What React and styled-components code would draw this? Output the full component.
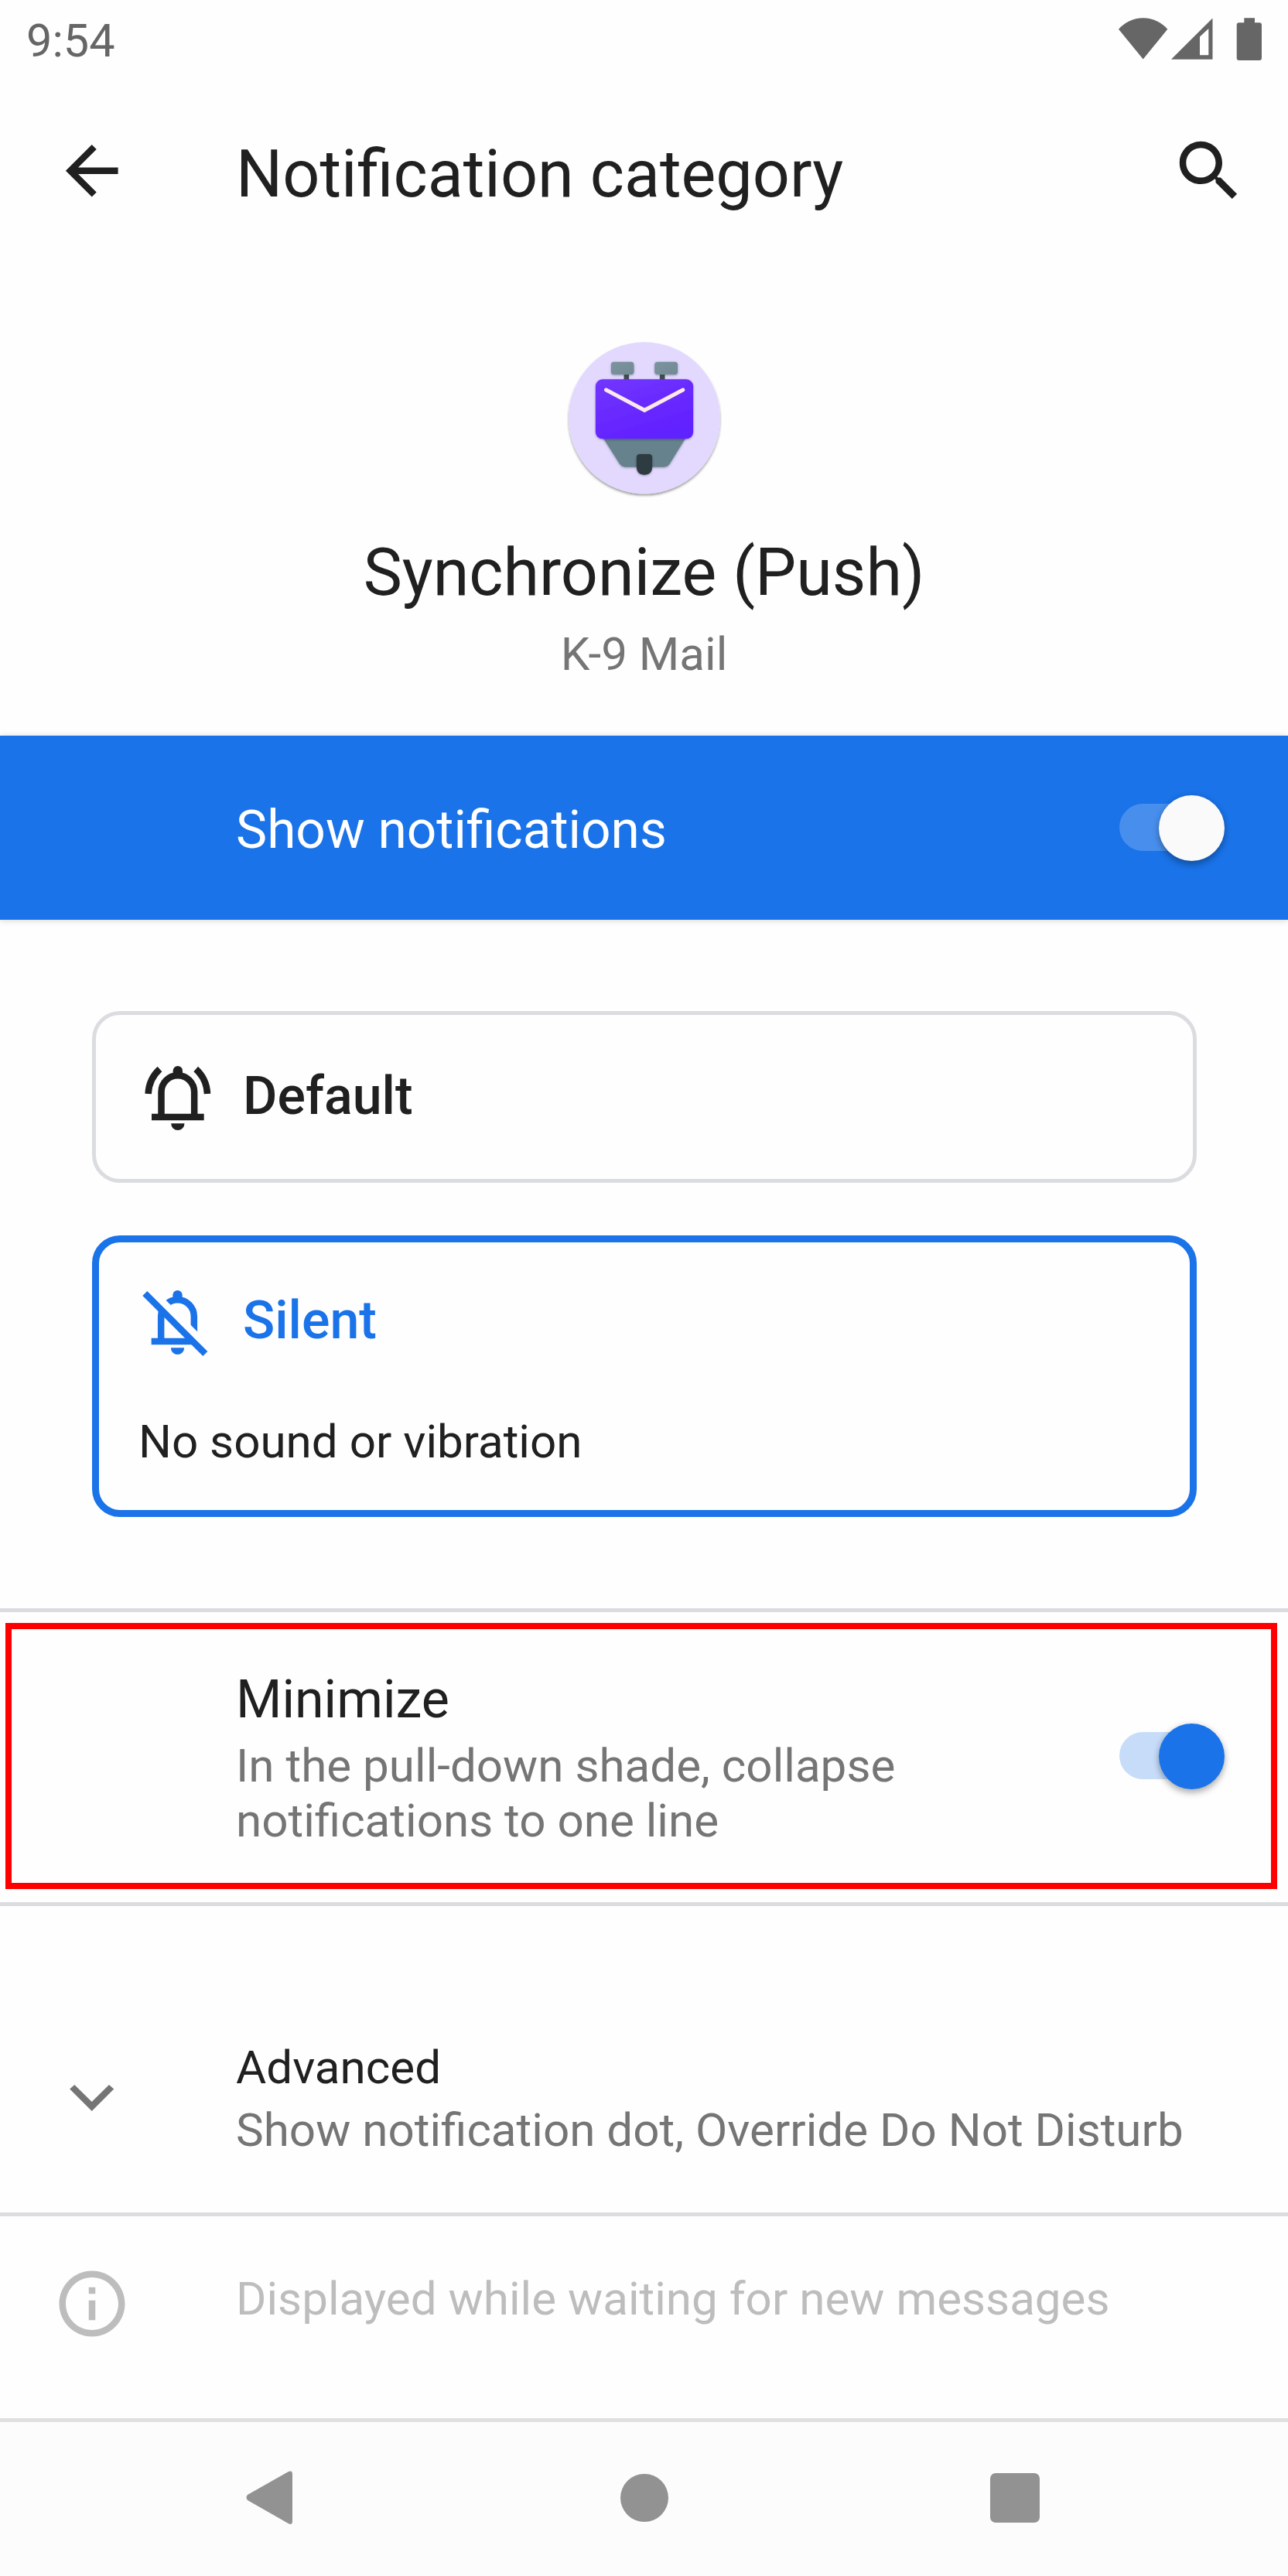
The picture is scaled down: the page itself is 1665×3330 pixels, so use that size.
import React from "react";
import styled, { createGlobalStyle } from "styled-components";

const color = {
  ink: "#202020",
  muted: "#757575",
  faint: "#bdbdbd",
  status: "#666666",
  accent: "#1a73e8",
  line: "#dadce0",
  alert: "#ff0000",
  nav: "#929292",
};

const GlobalStyle = createGlobalStyle`
  *, *::before, *::after { box-sizing: border-box; }
  body {
    margin: 0;
    background: #fefefe;
    font-family: Roboto, "Liberation Sans", sans-serif;
    -webkit-font-smoothing: antialiased;
  }
  svg { display: block; flex: none; }
  h1, h2, p { margin: 0; font-weight: 400; }
`;

const Screen = styled.div`
  display: flex;
  flex-direction: column;
  width: 1665px;
  height: 3330px;
  overflow: hidden;
  background: #fefefe;
  color: ${color.ink};
`;

const Text = styled.p`
  font-size: ${(p) => p.$size || 60.15}px;
  line-height: ${(p) => p.$line}px;
  font-weight: ${(p) => p.$weight || 400};
  color: ${(p) => p.$color || "inherit"};
  white-space: nowrap;
`;

const StatusBar = styled.header`
  display: flex;
  justify-content: space-between;
  align-items: flex-start;
  height: 102px;
  padding: 0 34px;
`;

const StatusIcons = styled.svg`
  margin-top: 23px;
`;

const AppBar = styled.div`
  display: flex;
  align-items: center;
  height: 237px;
  padding: 0 51px 0 68px;
`;

const AppTitle = styled(Text).attrs({ as: "h1" })`
  flex: 1;
  margin: 11px 0 0 135.500px;
`;

const Hero = styled.section`
  display: flex;
  flex-direction: column;
  align-items: center;
  height: 612px;
  padding-top: 100px;
`;

const HeroTitle = styled(Text).attrs({ as: "h2" })`
  margin: 42px 0 20px;
`;

const Banner = styled.section`
  display: flex;
  align-items: center;
  justify-content: space-between;
  height: 238px;
  flex: none;
  padding: 0 82px 0 305px;
  background: ${color.accent};
  color: #fff;
  box-shadow: 0 1px 8px rgba(0, 0, 0, 0.16);
`;

const BannerLabel = styled(Text)`
  margin-top: 6px;
`;

const Track = styled.div`
  display: flex;
  align-items: center;
  justify-content: flex-end;
  flex: none;
  width: 127px;
  height: 61px;
  margin: 0 9px 2px 0;
  border-radius: 31px;
  background: ${(p) => (p.$inverse ? "#488fed" : "#c6dcf9")};
`;

const Thumb = styled.div`
  flex: none;
  width: 85px;
  height: 85px;
  margin: 2px -9px 0 0;
  border-radius: 50%;
  background: ${(p) => (p.$inverse ? "#fafafa" : color.accent)};
  box-shadow: 0 5px 9px rgba(0, 0, 0, 0.27), 0 0 8px rgba(0, 0, 0, 0.1);
`;

const Options = styled.section`
  display: flex;
  flex-direction: column;
  gap: 68px;
  height: 890px;
  padding: 118px 118px 0 119px;
`;

const OptionCard = styled.div`
  height: ${(p) => p.$height}px;
  padding: ${(p) => 66 - p.$border}px ${(p) => 60 - p.$border}px 0;
  border: ${(p) => p.$border}px solid ${(p) => p.$color};
  border-radius: 36px;
  color: ${(p) => (p.$selected ? color.accent : color.ink)};
`;

const OptionHead = styled.div`
  display: flex;
  align-items: flex-start;
  gap: 43px;
  padding-left: 6px;
`;

const BellIcon = styled.svg`
  margin: 5px ${(p) => -p.$nudge}px 0 ${(p) => p.$nudge}px;
`;

const OptionNote = styled(Text)`
  margin-top: 65px;
`;

const Divider = styled.hr`
  flex: none;
  width: 100%;
  height: 5px;
  margin: 0;
  border: 0;
  background: ${(p) => p.$color || color.line};
`;

const Highlight = styled.section`
  display: flex;
  align-items: center;
  justify-content: space-between;
  flex: none;
  height: 344px;
  margin: 14px 14px 17px 7px;
  padding: 0 60px 0 290px;
  border: 8px solid ${color.alert};
`;

const MinimizeText = styled.div`
  display: flex;
  flex-direction: column;
  gap: 11px;
  margin-top: 6px;
`;

const ListRow = styled.section`
  display: grid;
  grid-template-columns: 237px 1fr;
  align-items: start;
  flex: none;
  height: ${(p) => p.$height}px;
  padding: ${(p) => p.$top}px 0 0 68px;
`;

const RowIcon = styled.svg`
  margin-top: ${(p) => p.$drop || 0}px;
`;

const NavBar = styled.nav`
  flex: 1;
  background: #fcfcfc;
`;

const NavButtons = styled.div`
  display: flex;
  align-items: center;
  justify-content: space-between;
  height: 195px;
  padding: 0 321px 0 318px;
`;

const HomeButton = styled.svg`
  margin-left: 7px;
`;

function Switch({ inverse }) {
  return (
    <Track $inverse={inverse} role="switch" aria-checked="true">
      <Thumb $inverse={inverse} />
    </Track>
  );
}

function StatusGlyphs() {
  return (
    <StatusIcons width="185" height="56" viewBox="1446 23 185 56" fill={color.status}>
      <path d="M1477.7 76.5 1446 37.7C1454 29 1465 23.3 1477.7 23.3S1501.400 29 1509.300 37.700Z" />
      <path fillRule="evenodd" d="M1514 76.800 1567.500 23.500V76.800ZM1551 47.500V71.300H1562.300V37Z" />
      <path d="M1608.300 23.300H1622V29.300H1628A3 3 0 0 1 1631 32.300V75A3 3 0 0 1 1628 78H1601.700A3 3 0 0 1 1598.700 75V32.300A3 3 0 0 1 1601.700 29.300H1608.300Z" />
    </StatusIcons>
  );
}

function MailBotIcon() {
  return (
    <svg width="200" height="210" viewBox="97.5 57 600 630">
      <defs>
        <linearGradient id="envelope" x1="0" y1="0" x2="0.5" y2="1">
          <stop offset="0" stopColor="#7236ff" />
          <stop offset="1" stopColor="#6120ff" />
        </linearGradient>
        <linearGradient id="ear" x1="0" y1="0" x2="1" y2="1">
          <stop offset="0" stopColor="#7c949f" />
          <stop offset="1" stopColor="#708a93" />
        </linearGradient>
        <filter id="disc" x="-10%" y="-10%" width="120%" height="120%">
          <feDropShadow dx="0" dy="7" stdDeviation="5" floodColor="#000" floodOpacity="0.38" />
        </filter>
        <filter id="part" x="-20%" y="-20%" width="140%" height="150%">
          <feDropShadow dx="0" dy="3" stdDeviation="4" floodColor="#000" floodOpacity="0.32" />
        </filter>
      </defs>
      <circle cx="397.500" cy="361" r="294" fill="#e3d9ff" filter="url(#disc)" />
      <path d="M318 188H338V214H318ZM457 188H477V214H457Z" fill="#424d53" />
      <g fill="url(#ear)" filter="url(#part)">
        <rect x="268" y="143" width="89" height="50" rx="12" />
        <rect x="437" y="143" width="90" height="50" rx="12" />
      </g>
      <path
        d="M232 430H563L497 537Q489 551 474 551H323Q309 551 300 537Z"
        fill="#66828d"
        filter="url(#part)"
      />
      <rect x="208" y="211" width="379" height="231" rx="27" fill="url(#envelope)" filter="url(#part)" />
      <path d="M249 252 398 331 547 252" fill="none" stroke="#fbe9ea" strokeWidth="15" strokeLinecap="round" />
      <path
        d="M381 501H414Q428 501 428 515V550Q428 582 397.500 582T367 550V515Q367 501 381 501Z"
        fill="#2e3a40"
        filter="url(#part)"
      />
    </svg>
  );
}

const BELL_BODY = "M325.500 452V365A64 64 0 0 1 453.500 365V452";
const BELL_KNOB = "M371 298V282.500A18.500 18.500 0 0 1 408 282.500V298Z";
const BELL_CLAPPER = "M363.500 487H415.500A26 26 0 0 1 363.500 487Z";

function BellRinging() {
  return (
    <BellIcon $nudge={2} width="86" height="84" viewBox="261 264 258 252">
      <g fill="currentColor">
        <path d={BELL_KNOB} />
        <path d={BELL_CLAPPER} />
        <path d="M288 449H491V475H288Z" />
      </g>
      <g fill="none" stroke="currentColor" strokeWidth="25.500">
        <path d={BELL_BODY} />
        <path d="M275 372C276.500 334 293 300 319.500 276" />
        <path d="M504 372C502.500 334 486 300 459.500 276" />
      </g>
    </BellIcon>
  );
}

function BellOff() {
  return (
    <BellIcon $nudge={-1} width="86" height="86" viewBox="253 264 258 258">
      <defs>
        <clipPath id="aboveSlash">
          <path d="M250 208 520 478V208Z" />
        </clipPath>
        <clipPath id="belowSlash">
          <path d="M250 263 520 533H250Z" />
        </clipPath>
      </defs>
      <g fill="currentColor">
        <path d={BELL_KNOB} />
        <path d={BELL_CLAPPER} />
        <path d="M288 449H491V475H288Z" clipPath="url(#belowSlash)" />
      </g>
      <g fill="none" stroke="currentColor" strokeWidth="25.500">
        <path d={BELL_BODY} clipPath="url(#aboveSlash)" />
        <path d={BELL_BODY} clipPath="url(#belowSlash)" />
        <path d="M263 276 497 510" />
      </g>
    </BellIcon>
  );
}

export default function App() {
  return (
    <>
      <GlobalStyle />
      <Screen>
        <StatusBar>
          <Text $size={59.4} $line={107} $color={color.status}>9:54</Text>
          <StatusGlyphs />
        </StatusBar>

        <AppBar>
          <svg width="101.5" height="101.5" viewBox="0 0 24 24" fill={color.ink}>
            <path d="M20 11H7.830l5.590-5.590L12 4l-8 8 8 8 1.410-1.410L7.830 13H20v-2z" />
          </svg>
          <AppTitle $size={84.5} $line={100}>Notification category</AppTitle>
          <svg width="102" height="102" viewBox="0 0 24 24" fill={color.ink}>
            <path d="M15.500 14h-.79l-.28-.27C15.410 12.590 16 11.110 16 9.500 16 5.910 13.090 3 9.500 3S3 5.910 3 9.500 5.910 16 9.500 16c1.610 0 3.090-.59 4.230-1.570l.27.28v.79l5 4.990L20.490 19l-4.990-5zm-6 0C7.010 14 5 11.990 5 9.500S7.010 5 9.500 5 14 7.010 14 9.500 11.990 14 9.500 14z" />
          </svg>
        </AppBar>

        <Hero>
          <MailBotIcon />
          <HeroTitle $size={84.45} $line={100}>Synchronize (Push)</HeroTitle>
          <Text $line={70} $color={color.muted}>K-9 Mail</Text>
        </Hero>

        <Banner>
          <BannerLabel $size={67.6} $line={80}>Show notifications</BannerLabel>
          <Switch inverse />
        </Banner>

        <Options>
          <OptionCard $height={222} $border={5} $color={color.line}>
            <OptionHead>
              <BellRinging />
              <Text $size={68.1} $line={88} $weight={500}>Default</Text>
            </OptionHead>
          </OptionCard>
          <OptionCard $height={364} $border={9} $color={color.accent} $selected>
            <OptionHead>
              <BellOff />
              <Text $size={68.1} $line={88} $weight={500}>Silent</Text>
            </OptionHead>
            <OptionNote $line={90} $color={color.ink}>No sound or vibration</OptionNote>
          </OptionCard>
        </Options>

        <Divider />
        <Highlight>
          <MinimizeText>
            <Text $size={68.1} $line={80}>Minimize</Text>
            <Text $line={70.7} $color={color.muted}>
              In the pull-down shade, collapse
              <br />
              notifications to one line
            </Text>
          </MinimizeText>
          <Switch />
        </Highlight>
        <Divider />

        <ListRow $height={396} $top={168}>
          <RowIcon $drop={63} width="102" height="34" viewBox="68 2695 102 34" fill={color.muted}>
            <path d="M96.300 2695 118.700 2717 141 2695 147.200 2700.500 118.700 2729 90.200 2700.500Z" />
          </RowIcon>
          <div>
            <Text $line={81}>Advanced</Text>
            <Text $line={82} $color={color.muted}>Show notification dot, Override Do Not Disturb</Text>
          </div>
        </ListRow>
        <Divider />

        <ListRow $height={261} $top={62}>
          <RowIcon width="102" height="102" viewBox="0 0 24 24" fill={color.faint}>
            <path d="M11 7h2v2h-2V7zm0 4h2v6h-2v-6zm1-9C6.480 2 2 6.480 2 12s4.480 10 10 10 10-4.480 10-10S17.520 2 12 2zm0 18c-4.410 0-8-3.590-8-8s3.590-8 8-8 8 3.590 8 8-3.590 8-8 8z" />
          </RowIcon>
          <Text $line={90} $color={color.faint}>Displayed while waiting for new messages</Text>
        </ListRow>

        <NavBar>
          <Divider $color="#e0e0e0" />
          <NavButtons>
            <svg width="60" height="70" viewBox="318 3194.500 60 70" fill={color.nav}>
              <path d="M320 3225.500 373 3195.600Q378 3193.500 378 3199V3259.500Q378 3265 373 3262.800L320 3232.500Q317 3229 320 3225.500Z" />
            </svg>
            <HomeButton width="62" height="62" viewBox="0 0 62 62" fill={color.nav}>
              <circle cx="31" cy="31" r="31" />
            </HomeButton>
            <svg width="64" height="64" viewBox="0 0 64 64" fill={color.nav}>
              <rect width="64" height="64" rx="7" />
            </svg>
          </NavButtons>
        </NavBar>
      </Screen>
    </>
  );
}
